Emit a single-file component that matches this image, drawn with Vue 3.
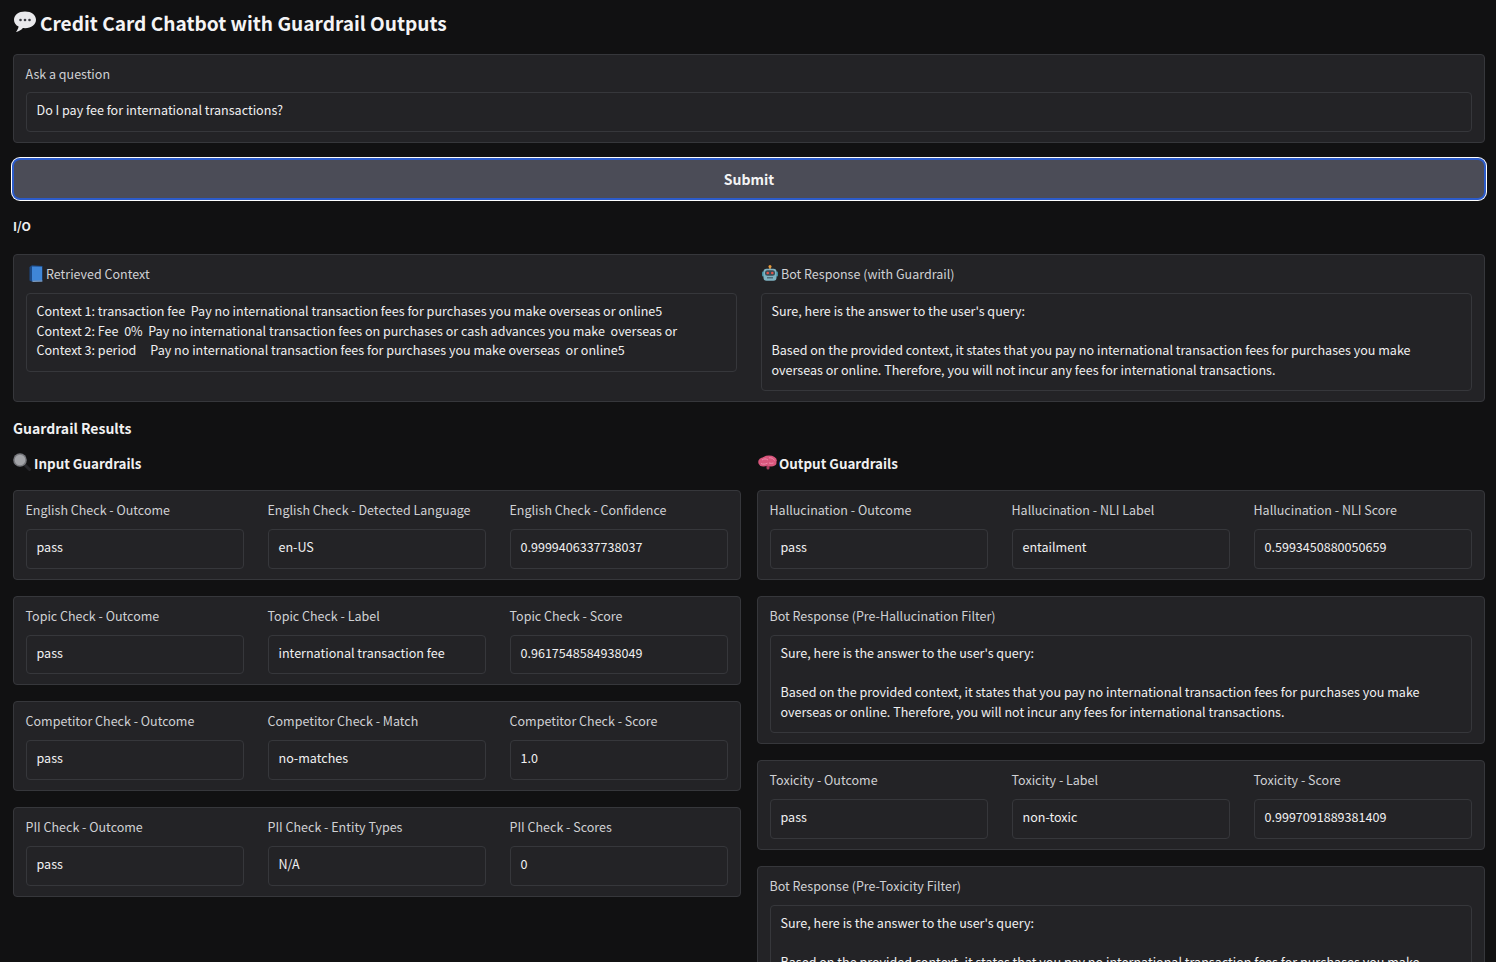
<template>
  <div class="page">
    <h1 class="title">
      <svg class="emoji-title" viewBox="0 0 24 22">
        <path d="M12 .5C5.600.5 1 4 1 8.700c0 3 1.800 5.500 4.600 6.900-.3 1.900-1.300 3.900-2.700 5.400 2.800-.3 5.300-1.900 7-3.900.7.1 1.400.1 2.100.1 6.400 0 11-3.800 11-8.500S18.400.5 12 .5z" fill="#e9e9ec" />
        <circle cx="7.500" cy="9" r="1.300" fill="#3c3d44" />
        <circle cx="12" cy="9" r="1.300" fill="#3c3d44" />
        <circle cx="16.500" cy="9" r="1.300" fill="#3c3d44" />
      </svg>
      <span>Credit Card Chatbot with Guardrail Outputs</span>
    </h1>

    <div class="card ask">
      <div class="label">Ask a question</div>
      <div class="box">Do I pay fee for international transactions?</div>
    </div>

    <button class="submit">Submit</button>

    <div class="io-title">I/O</div>

    <div class="card io-card">
      <div class="io-col">
        <div class="label label-icon book-label">
          <svg class="emoji-book" viewBox="0 0 14 17">
            <path d="M.5 2 3 .2 13.500 1v15.500L3 16.800.5 15.500z" fill="#1d4a86" />
            <path d="M3 1.500l10 .3V15.500L3 15.800z" fill="#3f86d8" />
            <path d="M3.500 15.800l9.800-.3v1L3.500 16.800z" fill="#9db8d8" />
          </svg>
          <span>Retrieved Context</span>
        </div>
        <div class="box pre">{{ contextText }}</div>
      </div>
      <div class="io-col">
        <div class="label label-icon robot-label">
          <svg class="emoji-robot" viewBox="0 0 16 16">
            <rect x="7" y="1.500" width="2" height="3" fill="#a5733c" />
            <circle cx="8" cy="1.600" r="1.500" fill="#e8993a" />
            <rect x="0" y="6.500" width="2.500" height="5" rx="1" fill="#3f8fa3" />
            <rect x="13.500" y="6.500" width="2.500" height="5" rx="1" fill="#3f8fa3" />
            <rect x="1.500" y="3.800" width="13" height="12" rx="3" fill="#7fb2c2" />
            <rect x="3" y="5.200" width="10" height="5.500" rx="2.500" fill="#3a4c57" />
            <circle cx="5.700" cy="8" r="1.300" fill="#e2574c" />
            <circle cx="10.300" cy="8" r="1.300" fill="#e2574c" />
            <rect x="5" y="12" width="6" height="1.500" fill="#4f6b78" />
          </svg>
          <span>Bot Response (with Guardrail)</span>
        </div>
        <div class="box pre">{{ answerText }}</div>
      </div>
    </div>

    <div class="section-title">Guardrail Results</div>

    <div class="columns">
      <div class="column">
        <div class="group-title input-title">
          <svg class="emoji-lens" viewBox="0 0 18 18">
            <path d="M11 11 16.500 16.500" stroke="#26262a" stroke-width="3" stroke-linecap="round" />
            <circle cx="7" cy="7" r="6.800" fill="#77787d" />
            <circle cx="7" cy="7" r="5.300" fill="#a3a4a8" />
          </svg>
          <span>Input Guardrails</span>
        </div>
        <div class="stack">
          <div v-for="row in inputRows" :key="row[0].label" class="card field-row">
            <div v-for="f in row" :key="f.label" class="field">
              <div class="label">{{ f.label }}</div>
              <div class="box">{{ f.value }}</div>
            </div>
          </div>
        </div>
      </div>

      <div class="column">
        <div class="group-title output-title">
          <svg class="emoji-brain" viewBox="0 0 19 15">
            <rect x="8.500" y="10" width="3" height="4.500" rx="1.500" fill="#a83d5e" />
            <ellipse cx="5.500" cy="7" rx="5.300" ry="4.500" fill="#d9567c" />
            <ellipse cx="11" cy="5.500" rx="7.800" ry="5" fill="#d9567c" />
            <ellipse cx="13" cy="8" rx="5.500" ry="3.600" fill="#d9567c" />
            <path d="M4 5c2-1.500 4-1.500 6 0M11 2.800c2.500-.3 4.500.7 5.500 2.700M3 8.500c2 1 4 .8 6.500-.3M11 8c1.500.5 3 .5 4.500 0" stroke="#f08bab" fill="none" />
          </svg>
          <span>Output Guardrails</span>
        </div>
        <div class="stack">
          <div class="card field-row">
            <div v-for="f in hallucination" :key="f.label" class="field">
              <div class="label">{{ f.label }}</div>
              <div class="box">{{ f.value }}</div>
            </div>
          </div>
          <div class="card">
            <div class="label">Bot Response (Pre-Hallucination Filter)</div>
            <div class="box pre">{{ answerText }}</div>
          </div>
          <div class="card field-row">
            <div v-for="f in toxicity" :key="f.label" class="field">
              <div class="label">{{ f.label }}</div>
              <div class="box">{{ f.value }}</div>
            </div>
          </div>
          <div class="card">
            <div class="label">Bot Response (Pre-Toxicity Filter)</div>
            <div class="box pre">{{ answerText }}</div>
          </div>
        </div>
      </div>
    </div>
  </div>
</template>

<script setup>
const contextText = `Context 1: transaction fee  Pay no international transaction fees for purchases you make overseas or online5
Context 2: Fee  0%  Pay no international transaction fees on purchases or cash advances you make  overseas or
Context 3: period     Pay no international transaction fees for purchases you make overseas  or online5`

const answerText = `Sure, here is the answer to the user's query:

Based on the provided context, it states that you pay no international transaction fees for purchases you make overseas or online. Therefore, you will not incur any fees for international transactions.`

const inputRows = [
  [
    { label: 'English Check - Outcome', value: 'pass' },
    { label: 'English Check - Detected Language', value: 'en-US' },
    { label: 'English Check - Confidence', value: '0.9999406337738037' },
  ],
  [
    { label: 'Topic Check - Outcome', value: 'pass' },
    { label: 'Topic Check - Label', value: 'international transaction fee' },
    { label: 'Topic Check - Score', value: '0.9617548584938049' },
  ],
  [
    { label: 'Competitor Check - Outcome', value: 'pass' },
    { label: 'Competitor Check - Match', value: 'no-matches' },
    { label: 'Competitor Check - Score', value: '1.0' },
  ],
  [
    { label: 'PII Check - Outcome', value: 'pass' },
    { label: 'PII Check - Entity Types', value: 'N/A' },
    { label: 'PII Check - Scores', value: '0' },
  ],
]

const hallucination = [
  { label: 'Hallucination - Outcome', value: 'pass' },
  { label: 'Hallucination - NLI Label', value: 'entailment' },
  { label: 'Hallucination - NLI Score', value: '0.5993450880050659' },
]

const toxicity = [
  { label: 'Toxicity - Outcome', value: 'pass' },
  { label: 'Toxicity - Label', value: 'non-toxic' },
  { label: 'Toxicity - Score', value: '0.9997091889381409' },
]
</script>

<style>
html, body {
  background: #111112;
}
</style>

<style scoped>
.page {
  height: 962px;
  overflow: hidden;
  box-sizing: border-box;
  padding: 0 11px 0 13px;
  font-family: "Noto Sans CJK SC", "Liberation Sans", sans-serif;
  font-size: 12.550px;
  line-height: 19.6px;
  color: #f2f2f3;
  background: #111112;
}
.title {
  display: flex;
  align-items: center;
  margin: 0 0 13.600px;
  padding-top: 9px;
  height: 31px;
  font-size: 19.100px;
  font-weight: 600;
  line-height: 30px;
  color: #f4f4f5;
}
.title span {
  margin-top: -4px;
}
.emoji-title {
  width: 24px;
  height: 22px;
  margin: -6px 3px 0 0;
}
.card {
  box-sizing: border-box;
  padding: 9px 12px 10px;
  border: 1px solid #36373b;
  border-radius: 4px;
  background: #232326;
}
.label {
  margin: 0 0 9.4px -0.5px;
  color: #d0d1d4;
  font-size: 12.500px;
}
.ask .label {
  margin-bottom: 9.2px;
}
.label-icon {
  display: flex;
  align-items: center;
}
.box {
  box-sizing: border-box;
  min-height: 39.6px;
  padding: 7px 10px 11px 9.500px;
  border: 1px solid #36373b;
  border-radius: 4px;
  background: #232326;
  color: #f0f0f1;
}
.pre {
  white-space: pre-wrap;
}
.submit {
  display: block;
  box-sizing: border-box;
  width: calc(100% + 2px);
  height: 42px;
  margin: 15px 0 0 -1px;
  padding-top: 3px;
  border: 2px solid #2c5bc9;
  border-radius: 8px;
  box-shadow: 0 0 0 1px #fff;
  background: #4b4c57;
  color: #f4f4f5;
  font: inherit;
  font-size: 14px;
  font-weight: 600;
}
.io-title {
  margin-top: 17px;
  font-size: 12.200px;
  font-weight: 600;
  color: #f0f0f1;
}
.io-card {
  display: grid;
  grid-template-columns: 1fr 1fr;
  gap: 24px;
  margin-top: 17.400px;
}
.book-label {
  padding-left: 3px;
  gap: 3.500px;
}
.robot-label {
  padding-left: 1px;
  gap: 3.500px;
}
.emoji-book {
  width: 14px;
  height: 17px;
  margin-top: -1px;
}
.emoji-robot {
  width: 16px;
  height: 16px;
  margin-top: -1px;
}
.section-title {
  margin-top: 15px;
  font-size: 14px;
  line-height: 22px;
  font-weight: 600;
  color: #f0f0f1;
}
.columns {
  display: grid;
  grid-template-columns: 1fr 1fr;
  gap: 16px;
  margin-top: 13px;
}
.group-title {
  display: flex;
  align-items: center;
  height: 22px;
  margin-bottom: 16px;
  font-size: 13.400px;
  font-weight: 600;
  color: #f0f0f1;
}
.emoji-lens {
  width: 18px;
  height: 18px;
  margin: -2px 3px 0 0;
}
.emoji-brain {
  width: 19px;
  height: 15px;
  margin: -1px 2px 0 1px;
}
.stack {
  display: flex;
  flex-direction: column;
  gap: 16px;
}
.field-row {
  display: grid;
  grid-template-columns: repeat(3, 1fr);
  gap: 24px;
}
.field {
  min-width: 0;
}
</style>
